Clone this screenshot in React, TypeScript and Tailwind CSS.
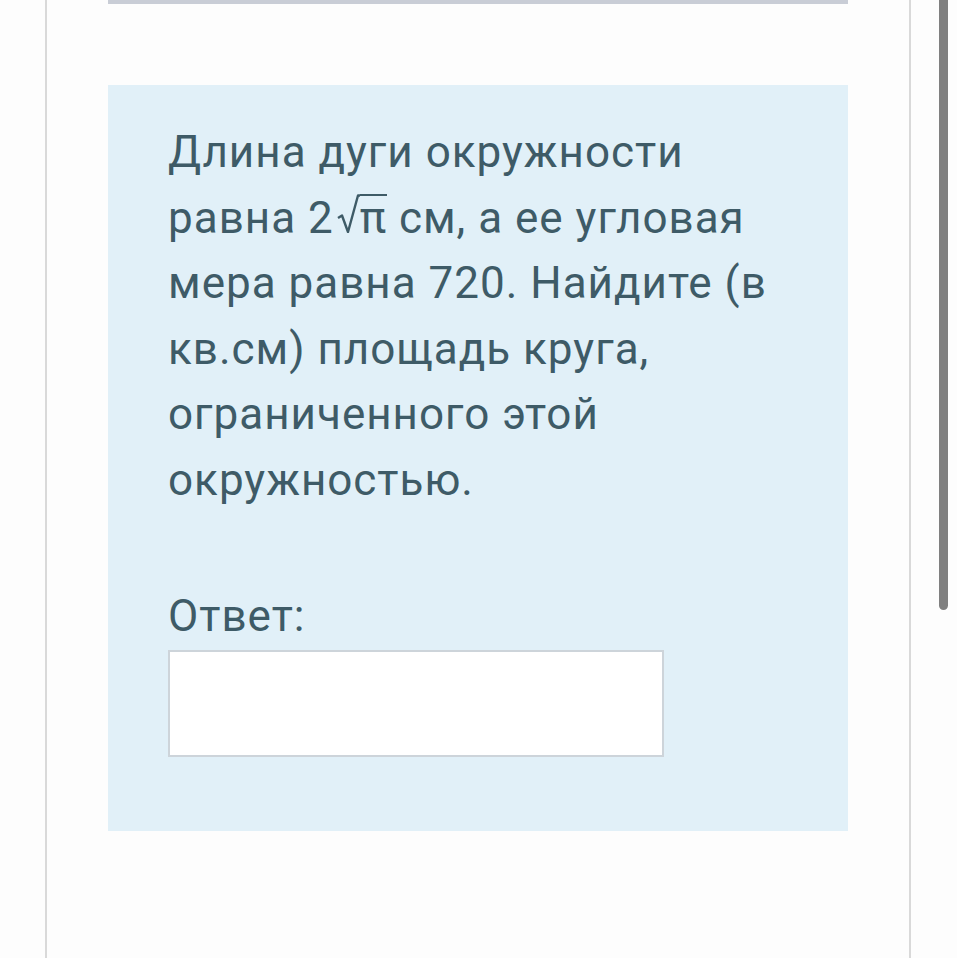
export default function App() {
  return (
    <div className="relative h-[958px] w-[957px] overflow-hidden bg-[#fdfdfd]" style={{ fontFamily: 'Roboto, "Noto Sans", sans-serif' }}>
      {/* page column with side rules */}
      <div className="ml-[45px] h-full w-[866px] border-x-2 border-[#d9d9d9] bg-[#fdfdfd]">
        <div className="mx-[61px] h-[4px] bg-[#c9cdd6]" />
        <div className="mx-[61px] mt-[81px] h-[746px] bg-[#e1f0f8] px-[60px] pt-[35px] text-[#3e5b67]">
          <p className="text-[44px] leading-[65.5px] tracking-[1px]">
            Длина дуги окружности равна 2
            <svg width="23" height="39" viewBox="0 0 23 39" className="ml-[3px] inline-block align-baseline">
              <path d="M1 24 L5 21.5 L11 38 L21 1.5 L23 1.5" fill="none" stroke="#3e5b67" strokeWidth="2.4" strokeLinejoin="round" />
            </svg>
            <span className="inline-block border-t-2 border-[#3e5b67] leading-none">π</span> см, а ее угловая мера равна 720. Найдите (в
            кв.см) площадь круга, ограниченного этой окружностью.
          </p>
          <p className="mt-[71px] text-[44px] leading-[65.5px] tracking-[1px]">Ответ:</p>
          <div className="h-[107px] w-[496px] border-2 border-[#cdd4da] bg-white" />
        </div>
      </div>
      {/* scrollbar */}
      <div className="absolute left-[939px] top-0 h-[610px] w-[9px] rounded-b-full bg-[#808080]" />
    </div>
  );
}
